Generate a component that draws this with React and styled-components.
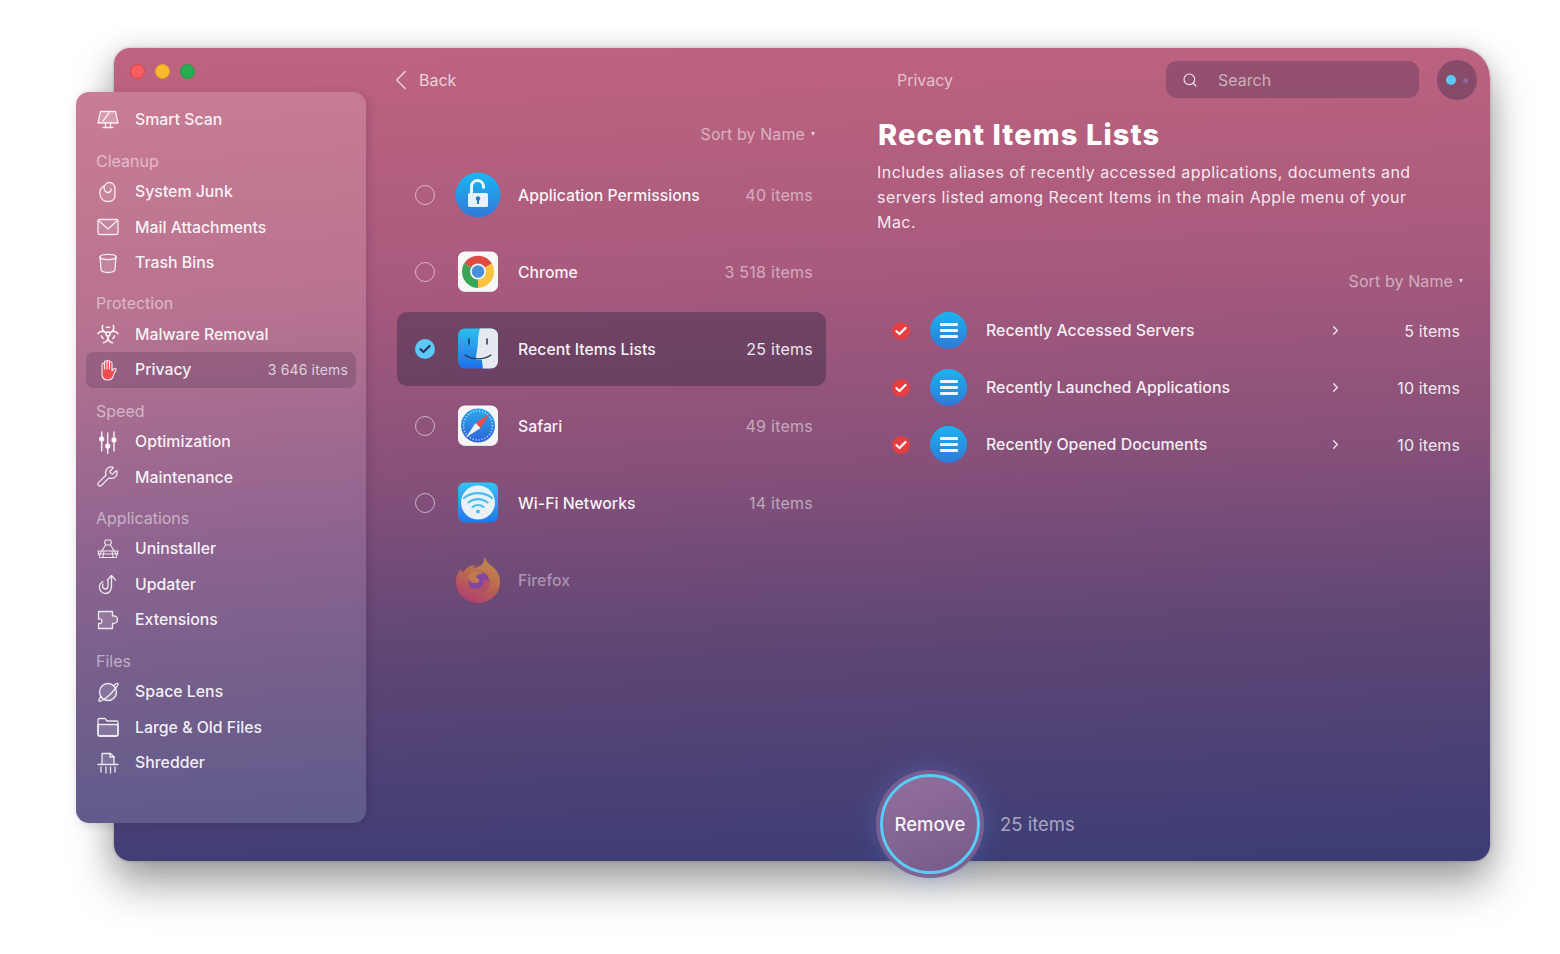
import { Biohazard, Wrench, ChevronLeft, ChevronRight, Search as SearchGlyph } from "lucide-react";
import styled, { createGlobalStyle } from "styled-components";

const GlobalStyle = createGlobalStyle`
  html, body {
    margin: 0;
    background: #fff;
    font-family: "Inter", "Liberation Sans", sans-serif;
  }
`;

const Line = ({ children, width = 1.3 }) => (
  <svg width="24" height="24" viewBox="0 0 24 24" fill="none" stroke="currentColor" strokeWidth={width} strokeLinecap="round" strokeLinejoin="round">
    {children}
  </svg>
);

const ScanIcon = () => (
  <Line>
    <path d="M4.500 3.500h15l2.500 11.500H2z" fill="rgba(255,255,255,.25)" />
    <path d="M9.500 15v3.500M14.500 15v3.500M7 19.500h10M13 5l-6 8" />
  </Line>
);
const JunkIcon = () => (
  <Line>
    <path d="M7.500 6C4.500 7.500 3.500 10.500 4 14.500c.5 4 3.500 7 8 7s7-2.500 7-6.500V8c0-3-2.500-5.500-5.500-5.500S8 5 8 8c0 2.500 2 4.500 4 4.500s3.500-1.500 3-3.500" fill="rgba(255,255,255,.1)" />
  </Line>
);
const MailIcon = () => (
  <Line>
    <rect x="2" y="4.500" width="20" height="15" rx="1.500" fill="rgba(255,255,255,.1)" />
    <path d="M2.500 5.500 12 14l9.500-8.500" />
  </Line>
);
const BinIcon = () => (
  <Line>
    <path d="M4 6l1 12.500c.2 2 3 3 7 3s6.800-1 7-3L20 6" fill="rgba(255,255,255,.12)" />
    <ellipse cx="12" cy="6" rx="8" ry="2.600" />
  </Line>
);
const HandIcon = () => (
  <svg width="24" height="24" viewBox="0 0 24 24" stroke="#f6e9ee" strokeWidth="1.100" strokeLinecap="round" strokeLinejoin="round">
    <path
      d="M6 13V6.500a1.250 1.250 0 0 1 2.500 0V4a1.250 1.250 0 0 1 2.500 0V3.500a1.250 1.250 0 0 1 2.500 0V5a1.250 1.250 0 0 1 2.500 0v8l1.800-2.300c1-1.100 2.700-.1 2.100 1.200l-2.400 5.300C17 20 14.800 22 11.500 22 8 22 6 19.500 6 16z"
      fill="#ee4a50"
    />
    <path d="M8.500 6.500V11M11 4v7M13.500 4v7" fill="none" />
  </svg>
);
const SliderIcon = () => (
  <Line width={1.5}>
    <path d="M5.700 2v19M11.700 3v21M18 2v19" />
    <circle cx="5.700" cy="9" r="1.900" fill="currentColor" />
    <circle cx="11.700" cy="16" r="1.900" fill="currentColor" />
    <circle cx="18" cy="10" r="1.900" fill="currentColor" />
  </Line>
);
const AppsIcon = () => (
  <Line width={1.100}>
    <path d="M9.500 3h5l1 3-1.500 2h-4L8.500 6zM9.500 8 4 17M14.500 8 20 17M2 14h20M2 17h20M5 20.500h14M2 14l2 6.500M22 14l-2 6.500M8 14l-1 6.500M16 14l1 6.500" />
  </Line>
);
const UpdaterIcon = () => (
  <Line>
    <path d="M15.500 4v10.500c0 4-2.500 7-6 7s-6-3-6-6.500c0-2.500 1.500-4.500 3.500-5.500" />
    <path d="M11.500 8l4-4.500 4 4.500M7 12c-1 2-.5 5 2.500 5 2 0 2.500-1.500 2.500-3V8" />
  </Line>
);
const PuzzleIcon = () => (
  <Line>
    <path d="M2.500 3.500h14v4.500c3-.7 5 1 5 3.500s-2 4.500-5 4v5h-14v-5c2.500.5 3.500-1 3.500-2.500S5 10.500 2.500 11z" fill="rgba(255,255,255,.14)" />
  </Line>
);
const LensIcon = () => (
  <Line width={1.400}>
    <circle cx="12" cy="12" r="8.500" fill="rgba(255,255,255,.14)" />
    <path d="M17.500 5.500c2-1.500 4-2.500 4.500-2 .7.700-2.500 5.500-7.500 10.500S4 22 3 21c-.5-.5.500-2.500 2-4.500" />
  </Line>
);
const FolderIcon = () => (
  <Line>
    <path d="M2 7V5a1.500 1.500 0 0 1 1.500-1.500h5.500l2 2.500h9.500A1.500 1.500 0 0 1 22 7.500v12a1.500 1.500 0 0 1-1.500 1.500h-17A1.500 1.500 0 0 1 2 19.500z" />
    <path d="M2 9.500h20v10a1.500 1.500 0 0 1-1.500 1.500h-17A1.500 1.500 0 0 1 2 19.500z" fill="rgba(255,255,255,.16)" />
  </Line>
);
const ShredderIcon = () => (
  <Line>
    <path d="M6 13V2.500h8.500l3.500 3.500v7" fill="rgba(255,255,255,.14)" />
    <path d="M14 2.500V6h4M2 13.500h20M5 16v5M10 16v6M14.500 16v6M19 16v5" />
  </Line>
);

const LockMark = () => (
  <svg width="46" height="46" viewBox="0 0 46 46">
    <defs>
      <linearGradient id="lockBg" x1="0" y1="0" x2="0" y2="1">
        <stop offset="0" stopColor="#1ab6f2" />
        <stop offset="1" stopColor="#3178d8" />
      </linearGradient>
    </defs>
    <circle cx="23" cy="23" r="22.500" fill="url(#lockBg)" />
    <path d="M16.500 21v-6.500a6 6 0 0 1 12 0v2" fill="none" stroke="#eaf5fc" strokeWidth="3" />
    <rect x="13" y="21" width="20" height="14" rx="1.500" fill="#e6f1f9" />
    <circle cx="23" cy="26.500" r="2.200" fill="#2a78bf" />
    <rect x="22" y="27" width="2" height="5" fill="#2a78bf" />
  </svg>
);
const ChromeMark = () => (
  <svg width="40" height="42" viewBox="0 0 40 42">
    <rect x="0" y="1" width="40" height="40" rx="7" fill="#d8ccd3" />
    <rect x="0" y="0.500" width="40" height="40" rx="7" fill="#f8f7f7" />
    <path d="M20 20.500 6 12.500A16.500 16.500 0 0 1 34 12.500z" fill="#df4a42" />
    <path d="M20 20.500 34 12.500A16.500 16.500 0 0 1 20 37z" fill="#f9c33d" />
    <path d="M20 20.500V37A16.500 16.500 0 0 1 6 12.500z" fill="#3ba455" />
    <circle cx="20" cy="20.500" r="8" fill="#f4f4f4" />
    <circle cx="20" cy="20.500" r="6.300" fill="#4a8fdc" />
  </svg>
);
const FinderMark = () => (
  <svg width="40" height="42" viewBox="0 0 40 42">
    <defs>
      <linearGradient id="finderBg" x1="0" y1="0" x2="0" y2="1">
        <stop offset="0" stopColor="#2bc0ef" />
        <stop offset="1" stopColor="#1f6fe8" />
      </linearGradient>
    </defs>
    <rect x="0" y="0.500" width="40" height="40" rx="7" fill="url(#finderBg)" />
    <path d="M22 .5h11a7 7 0 0 1 7 7v26a7 7 0 0 1-7 7H25c-.5-3-1-6-1-9h-6c0-7 2-12 2-19 0-4 1-9 2-12z" fill="#e6e9ef" />
    <path d="M7 27c7 5 19 5 26 0" fill="none" stroke="#27324e" strokeWidth="1.200" strokeLinecap="round" />
    <path d="M11 11v5M29 11v5" stroke="#27324e" strokeWidth="1.500" strokeLinecap="round" />
  </svg>
);
const SafariMark = () => (
  <svg width="40" height="42" viewBox="0 0 40 42">
    <defs>
      <linearGradient id="safariBg" x1="0" y1="0" x2="0" y2="1">
        <stop offset="0" stopColor="#27a9ee" />
        <stop offset="1" stopColor="#2f62d8" />
      </linearGradient>
    </defs>
    <rect x="0" y="1" width="40" height="40" rx="7" fill="#d8ccd3" />
    <rect x="0" y="0.500" width="40" height="40" rx="7" fill="#f6f6f7" />
    <circle cx="20" cy="20.500" r="17" fill="url(#safariBg)" />
    <circle cx="20" cy="20.500" r="14.500" fill="none" stroke="#cfe6fa" strokeWidth="1.500" strokeDasharray="1 2" />
    <path d="M32 8.500 17.500 18l5 5z" fill="#ee4b45" />
    <path d="M8 32.500 22.500 23l-5-5z" fill="#f2f2f2" />
  </svg>
);
const WifiMark = () => (
  <svg width="40" height="42" viewBox="0 0 40 42">
    <defs>
      <linearGradient id="wifiBg" x1="0" y1="0" x2="0" y2="1">
        <stop offset="0" stopColor="#35c3f4" />
        <stop offset="1" stopColor="#1f78ea" />
      </linearGradient>
    </defs>
    <rect x="0" y="0.500" width="40" height="40" rx="7" fill="url(#wifiBg)" />
    <circle cx="20" cy="20.500" r="17" fill="#e9f1f8" />
    <path d="M6 16c8-6.500 20-6.500 28 0M10.500 20.500c5.500-4.500 13.500-4.500 19 0M14.500 25c3.200-2.500 7.800-2.500 11 0" fill="none" stroke="#4cbcf0" strokeWidth="2.100" strokeLinecap="round" />
    <circle cx="20" cy="29.500" r="2" fill="#4cbcf0" />
  </svg>
);
const FirefoxMark = () => (
  <svg width="46" height="48" viewBox="0 0 46 48">
    <defs>
      <linearGradient id="foxBg" x1="0.800" y1="0" x2="0.300" y2="1">
        <stop offset="0" stopColor="#e0a83c" />
        <stop offset="0.500" stopColor="#da7440" />
        <stop offset="1" stopColor="#c8396f" />
      </linearGradient>
    </defs>
    <path d="M30 1c1 5 4 7 8 10 5 4 7 10 7 15 0 12-10 21-22 21S1 38 1 26c0-6 2-10 5-13 0 2 1 3 2 4 2-4 6-8 12-8-1 1-2 2-2 3 4-1 9-2 10-5 1-2 1-4 2-6z" fill="url(#foxBg)" />
    <circle cx="24" cy="26" r="10.500" fill="#8a45b0" />
    <path d="M13 19c4-4 11-5 16-1-3-1-7 0-8 3 2 1 4 3 3 5-1 1-4 1-6 1l-4-3z" fill="#e08a42" />
    <path d="M34.500 25c0 6-5 11.500-11.500 11.500-4 0-8-2-10-6.500 3 3 9 4 13 1 3-2 3-5 2-8z" fill="#d2545e" />
  </svg>
);

const sidebarGroups = [
  { items: [{ name: "Smart Scan", icon: <ScanIcon /> }] },
  {
    title: "Cleanup",
    items: [
      { name: "System Junk", icon: <JunkIcon /> },
      { name: "Mail Attachments", icon: <MailIcon /> },
      { name: "Trash Bins", icon: <BinIcon /> },
    ],
  },
  {
    title: "Protection",
    items: [
      { name: "Malware Removal", icon: <Biohazard size={24} strokeWidth={1.6} /> },
      { name: "Privacy", active: true, count: "3 646 items", icon: <HandIcon /> },
    ],
  },
  {
    title: "Speed",
    items: [
      { name: "Optimization", icon: <SliderIcon /> },
      { name: "Maintenance", icon: <Wrench size={23} strokeWidth={1.3} /> },
    ],
  },
  {
    title: "Applications",
    items: [
      { name: "Uninstaller", icon: <AppsIcon /> },
      { name: "Updater", icon: <UpdaterIcon /> },
      { name: "Extensions", icon: <PuzzleIcon /> },
    ],
  },
  {
    title: "Files",
    items: [
      { name: "Space Lens", icon: <LensIcon /> },
      { name: "Large & Old Files", icon: <FolderIcon /> },
      { name: "Shredder", icon: <ShredderIcon /> },
    ],
  },
];

const apps = [
  { name: "Application Permissions", count: "40 items", mark: <LockMark /> },
  { name: "Chrome", count: "3 518 items", mark: <ChromeMark /> },
  { name: "Recent Items Lists", count: "25 items", mark: <FinderMark />, selected: true },
  { name: "Safari", count: "49 items", mark: <SafariMark /> },
  { name: "Wi-Fi Networks", count: "14 items", mark: <WifiMark /> },
  { name: "Firefox", mark: <FirefoxMark />, off: true },
];

const recentLists = [
  { name: "Recently Accessed Servers", count: "5 items" },
  { name: "Recently Launched Applications", count: "10 items" },
  { name: "Recently Opened Documents", count: "10 items" },
];

const CheckMark = ({ color }) => (
  <svg width="12" height="10" viewBox="0 0 12 10" fill="none" stroke={color} strokeWidth="2.200" strokeLinecap="round" strokeLinejoin="round">
    <path d="M1.500 5.200 4.500 8l6-6" />
  </svg>
);

export default function App() {
  return (
    <>
      <GlobalStyle />
      <Stage>
        <Window>
          <LeftColumn>
            <Lights>
              <Light $color="#f65e62" $edge="#e23f44" />
              <Light $color="#f8ba2e" $edge="#e5a31e" />
              <Light $color="#27ae50" $edge="#1f9c45" />
            </Lights>
            <Sidebar>
              {sidebarGroups.map((group, i) => (
                <div key={i}>
                  {group.title && <GroupTitle>{group.title}</GroupTitle>}
                  {group.items.map((item) => (
                    <NavRow key={item.name} $active={item.active}>
                      <NavIcon>{item.icon}</NavIcon>
                      <span>{item.name}</span>
                      {item.count && <NavCount>{item.count}</NavCount>}
                    </NavRow>
                  ))}
                </div>
              ))}
            </Sidebar>
          </LeftColumn>

          <Main>
            <Topbar>
              <BackLink>
                <ChevronLeft size={34} strokeWidth={1} />
                <span>Back</span>
              </BackLink>
              <PageTitle>Privacy</PageTitle>
              <SearchBox>
                <SearchGlyph size={16} strokeWidth={1.8} color="#f0e4ea" />
                <span>Search</span>
              </SearchBox>
              <Assistant>
                <BlueDot />
                <FaintDot />
              </Assistant>
            </Topbar>

            <Columns>
              <ListColumn>
                <SortRow>
                  Sort by Name <SortCaret />
                </SortRow>
                {apps.map((app) => (
                  <AppRow key={app.name} $selected={app.selected}>
                    {app.off ? <RadioGap /> : app.selected ? (
                      <RadioOn>
                        <CheckMark color="#2c3358" />
                      </RadioOn>
                    ) : (
                      <Radio />
                    )}
                    <MarkSlot $off={app.off}>{app.mark}</MarkSlot>
                    <AppName $off={app.off}>{app.name}</AppName>
                    {app.count && <AppCount $selected={app.selected}>{app.count}</AppCount>}
                  </AppRow>
                ))}
              </ListColumn>

              <DetailColumn>
                <Heading>Recent Items Lists</Heading>
                <Blurb>
                  Includes aliases of recently accessed applications, documents and servers listed among Recent Items in the main Apple menu of your Mac.
                </Blurb>
                <DetailSort>
                  Sort by Name <SortCaret />
                </DetailSort>
                {recentLists.map((row) => (
                  <DetailRow key={row.name}>
                    <RedCheck>
                      <CheckMark color="#fff" />
                    </RedCheck>
                    <ListBadge>
                      <i />
                      <i />
                      <i />
                    </ListBadge>
                    <DetailName>{row.name}</DetailName>
                    <ChevronRight size={15} strokeWidth={2} color="#f3e8ee" />
                    <DetailCount>{row.count}</DetailCount>
                  </DetailRow>
                ))}
              </DetailColumn>
            </Columns>

            <Footer>
              <RemoveButton>Remove</RemoveButton>
              <FooterCount>25 items</FooterCount>
            </Footer>
          </Main>
        </Window>
      </Stage>
    </>
  );
}

const Stage = styled.div`
  width: 1560px;
  height: 954px;
  box-sizing: border-box;
  padding: 48px 70px 0 114px;
  overflow: hidden;
  background: #fff;
`;

const Window = styled.div`
  display: flex;
  width: 1376px;
  height: 813px;
  border-radius: 16px 30px 16px 16px;
  background: linear-gradient(178deg, #bf6480 0%, #a95a7d 28%, #85507a 52%, #5e4675 72%, #3b3c75 100%);
  box-shadow: 0 0 3px rgba(0, 0, 0, 0.25), 0 24px 44px rgba(0, 0, 0, 0.34), 0 4px 30px rgba(0, 0, 0, 0.14);
  color: #fff;
`;

const LeftColumn = styled.div`
  width: 252px;
  flex: none;
  display: flex;
  flex-direction: column;
`;

const Lights = styled.div`
  display: flex;
  gap: 10px;
  height: 44px;
  padding: 16px 0 0 16px;
  box-sizing: border-box;
`;

const Light = styled.span`
  width: 15px;
  height: 15px;
  box-sizing: border-box;
  border: 1px solid ${(p) => p.$edge};
  border-radius: 50%;
  background: ${(p) => p.$color};
`;

const Sidebar = styled.nav`
  width: 290px;
  height: 731px;
  margin-left: -38px;
  box-sizing: border-box;
  padding: 10px 10px 0;
  border-radius: 13px;
  background: linear-gradient(176deg, #c97c94 0%, #b87390 30%, #936590 58%, #775f8c 78%, #5e5b8b 100%);
  box-shadow: 2px 2px 10px rgba(50, 20, 60, 0.18);
`;

const GroupTitle = styled.div`
  height: 36.3px;
  box-sizing: border-box;
  padding: 13px 0 0 10px;
  font-size: 16px;
  line-height: 20px;
  color: rgba(255, 255, 255, 0.5);
`;

const NavRow = styled.div`
  display: flex;
  align-items: center;
  height: 35.5px;
  padding: 0 8px 0 10px;
  gap: 15px;
  border-radius: 8px;
  font-size: 15.850px;
  font-weight: 500;
  color: rgba(255, 255, 255, 0.93);
  background: ${(p) => (p.$active ? "rgba(60, 40, 75, 0.22)" : "transparent")};
`;

const NavIcon = styled.span`
  width: 24px;
  height: 24px;
  flex: none;
  color: rgba(255, 255, 255, 0.85);
  svg {
    display: block;
  }
`;

const NavCount = styled.span`
  margin-left: auto;
  font-size: 14px;
  letter-spacing: 0.15px;
  font-weight: 400;
  color: rgba(255, 255, 255, 0.72);
`;

const Main = styled.div`
  flex: 1;
  min-width: 0;
  display: flex;
  flex-direction: column;
`;

const Topbar = styled.header`
  display: grid;
  grid-template-columns: 500px 269px 253px 40px;
  align-items: center;
  height: 64px;
  padding-left: 31px;
`;

const BackLink = styled.div`
  display: flex;
  align-items: center;
  gap: 1px;
  margin-left: -13px;
  font-size: 16px;
  color: rgba(255, 255, 255, 0.72);
`;

const PageTitle = styled.div`
  font-size: 16px;
  color: rgba(255, 255, 255, 0.62);
`;

const SearchBox = styled.div`
  display: flex;
  align-items: center;
  gap: 20px;
  height: 37px;
  margin-top: -1px;
  padding-left: 16px;
  box-sizing: border-box;
  border-radius: 11px;
  background: rgba(70, 45, 75, 0.33);
  font-size: 16px;
  color: rgba(255, 255, 255, 0.55);
`;

const Assistant = styled.div`
  display: flex;
  align-items: center;
  justify-content: center;
  gap: 7px;
  width: 40px;
  height: 40px;
  margin-left: 18px;
  border-radius: 50%;
  background: rgba(70, 45, 75, 0.42);
`;

const BlueDot = styled.span`
  width: 10px;
  height: 10px;
  border-radius: 50%;
  background: #5cc8f6;
`;

const FaintDot = styled.span`
  width: 5px;
  height: 5px;
  border-radius: 50%;
  background: rgba(140, 110, 180, 0.8);
`;

const Columns = styled.div`
  display: flex;
  gap: 52px;
  padding-left: 31px;
`;

const ListColumn = styled.div`
  width: 429px;
  flex: none;
  display: flex;
  flex-direction: column;
  gap: 3px;
`;

const SortRow = styled.div`
  display: flex;
  align-items: center;
  justify-content: flex-end;
  gap: 6px;
  height: 43px;
  padding-right: 11px;
  font-size: 16px;
  letter-spacing: 0.1px;
  color: rgba(255, 255, 255, 0.52);
`;

const SortCaret = styled.span`
  width: 0;
  height: 0;
  border-left: 2.500px solid transparent;
  border-right: 2.500px solid transparent;
  border-top: 4px solid rgba(255, 255, 255, 0.7);
`;

const AppRow = styled.div`
  display: flex;
  align-items: center;
  height: 74px;
  padding: 0 13px 0 18px;
  border-radius: 10px;
  background: ${(p) => (p.$selected ? "rgba(55, 42, 72, 0.45)" : "transparent")};
`;

const Radio = styled.span`
  width: 20px;
  height: 20px;
  flex: none;
  box-sizing: border-box;
  border: 1.500px solid rgba(255, 255, 255, 0.55);
  border-radius: 50%;
`;

const RadioGap = styled.span`
  width: 20px;
  flex: none;
`;

const RadioOn = styled.span`
  width: 20px;
  height: 20px;
  flex: none;
  display: flex;
  align-items: center;
  justify-content: center;
  border-radius: 50%;
  background: #5cc8f6;
`;

const MarkSlot = styled.span`
  width: 46px;
  height: 48px;
  flex: none;
  display: flex;
  align-items: center;
  justify-content: center;
  margin: 0 17px 0 20px;
  opacity: ${(p) => (p.$off ? 0.72 : 1)};
  svg {
    display: block;
  }
`;

const AppName = styled.span`
  font-size: 15.800px;
  font-weight: 500;
  color: rgba(255, 255, 255, ${(p) => (p.$off ? 0.42 : 0.95)});
`;

const AppCount = styled.span`
  margin-left: auto;
  font-size: 16px;
  letter-spacing: 0.25px;
  color: rgba(255, 255, 255, ${(p) => (p.$selected ? 0.9 : 0.5)});
`;

const DetailColumn = styled.div`
  flex: 1;
  min-width: 0;
  padding-right: 30px;
`;

const Heading = styled.h1`
  margin: 0;
  padding-top: 1px;
  font-size: 29px;
  line-height: 44px;
  font-weight: 800;
  letter-spacing: 1.1px;
  color: #fff;
`;

const Blurb = styled.p`
  width: 550px;
  margin: 3px 0 0 -1px;
  font-size: 16px;
  line-height: 25px;
  letter-spacing: 0.44px;
  color: rgba(255, 255, 255, 0.88);
`;

const DetailSort = styled.div`
  display: flex;
  align-items: center;
  justify-content: flex-end;
  gap: 6px;
  height: 42px;
  margin: 25px -3px 0 0;
  font-size: 16px;
  letter-spacing: 0.1px;
  color: rgba(255, 255, 255, 0.52);
`;

const DetailRow = styled.div`
  display: grid;
  grid-template-columns: 18px 57px 1fr 15px 117px;
  align-items: center;
  height: 57px;
  padding-left: 14px;
`;

const RedCheck = styled.span`
  width: 18px;
  height: 18px;
  display: flex;
  align-items: center;
  justify-content: center;
  border-radius: 50%;
  background: #e63f42;
`;

const ListBadge = styled.span`
  width: 37px;
  height: 37px;
  margin-left: 20px;
  display: flex;
  flex-direction: column;
  align-items: center;
  justify-content: center;
  gap: 3px;
  border-radius: 50%;
  background: linear-gradient(#1ab4f0, #3078d6);
  i {
    display: block;
    width: 18px;
    height: 3px;
    border-radius: 1px;
    background: #ecf6fc;
  }
`;

const DetailName = styled.span`
  padding-left: 19px;
  font-size: 15.900px;
  font-weight: 500;
  color: rgba(255, 255, 255, 0.92);
`;

const DetailCount = styled.span`
  text-align: right;
  font-size: 16px;
  letter-spacing: 0.1px;
  color: rgba(255, 255, 255, 0.9);
`;

const Footer = styled.div`
  display: flex;
  align-items: center;
  gap: 20px;
  margin-top: auto;
  margin-bottom: -13px;
  padding-left: 514px;
`;

const RemoveButton = styled.button`
  width: 100px;
  height: 100px;
  flex: none;
  box-sizing: border-box;
  border: 3px solid #58cdf5;
  border-radius: 50%;
  background: linear-gradient(160deg, #93709d, #775a8a);
  box-shadow: 0 0 0 4px rgba(125, 95, 145, 0.95), 0 0 30px rgba(90, 140, 220, 0.45);
  font-family: inherit;
  font-size: 18.500px;
  font-weight: 500;
  color: rgba(255, 255, 255, 0.95);
`;

const FooterCount = styled.span`
  font-size: 18.500px;
  color: rgba(255, 255, 255, 0.55);
`;
